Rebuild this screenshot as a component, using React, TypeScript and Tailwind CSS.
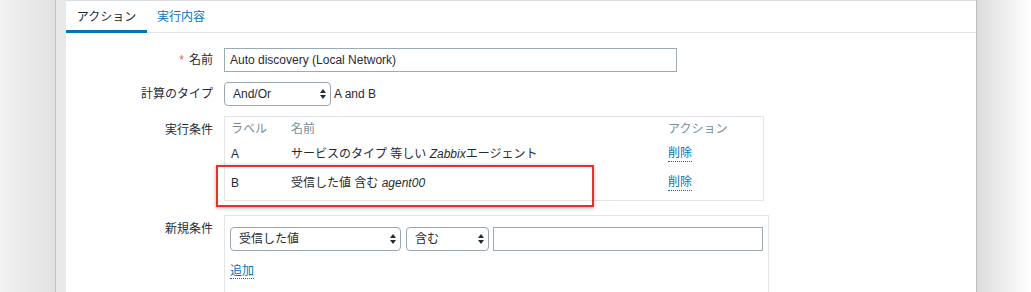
const font = {
  fontFamily: '"Liberation Sans", "Noto Sans CJK JP", Arial, sans-serif',
};

function UpDown() {
  return (
    <svg width="6" height="10" viewBox="0 0 6 10" className="shrink-0">
      <path d="M3 0 L6 4 H0 Z" fill="#1f2c33" />
      <path d="M3 10 L6 6 H0 Z" fill="#1f2c33" />
    </svg>
  );
}

function Select({ value, width }: { value: string; width: string }) {
  return (
    <div
      className={`${width} h-[24px] flex items-center justify-between pl-[8px] pr-[4px] border border-[#9aa7af] rounded-[4px] bg-white text-[12px] text-[#1f2c33]`}
    >
      <span>{value}</span>
      <UpDown />
    </div>
  );
}

function Link({ children }: { children: React.ReactNode }) {
  return (
    <span className="text-[#0275b8] text-[12px] border-b border-dotted border-[#0275b8] leading-[15px]">
      {children}
    </span>
  );
}

export default function App() {
  return (
    <div className="w-[1031px] h-[292px] flex overflow-hidden" style={font}>
      {/* left backdrop */}
      <div className="w-[55px] h-full bg-gradient-to-r from-[#f2f2f2] to-[#e2e2e2]" />
      <div className="w-[1px] h-full bg-[#c4c4c4]" />
      <div className="w-[10px] h-full bg-[#e9e9ec]" />

      {/* window */}
      <div className="w-[910px] h-full bg-white border-t border-[#dcdce2] flex flex-col">
        {/* tabs */}
        <div className="flex h-[32px] border-b border-[#e3e4e8]">
          <div className="w-[81px] h-[32px] flex items-center justify-center text-[12px] text-[#1f2c33] border-b-[3px] border-[#0275b8] pt-[2px]">
            アクション
          </div>
          <div className="px-[10px] h-[32px] flex items-center text-[12px] text-[#0275b8] pb-[1px]">
            実行内容
          </div>
        </div>

        {/* form */}
        <div className="pt-[15px] flex flex-col gap-[10px] text-[12px] text-[#1f2c33]">
          <div className="flex items-center">
            <div className="w-[158px] text-right pr-[11px]">
              <span className="text-[#e45959] mr-[5px]">*</span>名前
            </div>
            <div className="w-[453px] h-[24px] border border-[#9aabb3] flex items-center px-[5px]">
              Auto discovery (Local Network)
            </div>
          </div>

          <div className="flex items-center">
            <div className="w-[158px] text-right pr-[11px]">計算のタイプ</div>
            <Select value="And/Or" width="w-[107px]" />
            <span className="ml-[3px]">A and B</span>
          </div>

          <div className="flex items-start">
            <div className="w-[158px] text-right pr-[11px] pt-[5px]">実行条件</div>
            <div className="relative w-[540px] border border-[#e5e5e9]">
              <div className="flex h-[24px] items-center text-[#768d99] px-[6px]">
                <span className="w-[60px]">ラベル</span>
                <span className="w-[377px]">名前</span>
                <span>アクション</span>
              </div>
              <div className="flex h-[25px] items-center px-[6px]">
                <span className="w-[60px]">A</span>
                <span className="w-[377px]">
                  サービスのタイプ 等しい <i>Zabbix</i>エージェント
                </span>
                <Link>削除</Link>
              </div>
              <div className="flex h-[34px] items-center px-[6px] pb-[1px]">
                <span className="w-[60px]">B</span>
                <span className="w-[377px]">
                  受信した値 含む <i>agent00</i>
                </span>
                <Link>削除</Link>
              </div>
              <div className="absolute left-[-9px] top-[48px] w-[378px] h-[42px] border-2 border-[#ee2c2c] shadow-[0_1px_4px_rgba(0,0,0,0.3)]" />
            </div>
          </div>

          <div className="flex items-start mt-[4px]">
            <div className="w-[158px] text-right pr-[11px] pt-[5px]">新規条件</div>
            <div className="w-[545px] h-[80px] border border-[#e5e5e9] pt-[11px] px-[5px]">
              <div className="flex items-center">
                <Select value="受信した値" width="w-[171px]" />
                <div className="w-[5px]" />
                <Select value="含む" width="w-[83px]" />
                <div className="w-[4px]" />
                <div className="w-[270px] h-[24px] border border-[#9aabb3]" />
              </div>
              <div className="mt-[11px]">
                <Link>追加</Link>
              </div>
            </div>
          </div>
        </div>
      </div>

      {/* right backdrop */}
      <div className="w-[1px] h-full bg-[#bdbdbd]" />
      <div className="flex-1 h-full bg-gradient-to-r from-[#dcdcdc] to-[#ffffff]" />
    </div>
  );
}
